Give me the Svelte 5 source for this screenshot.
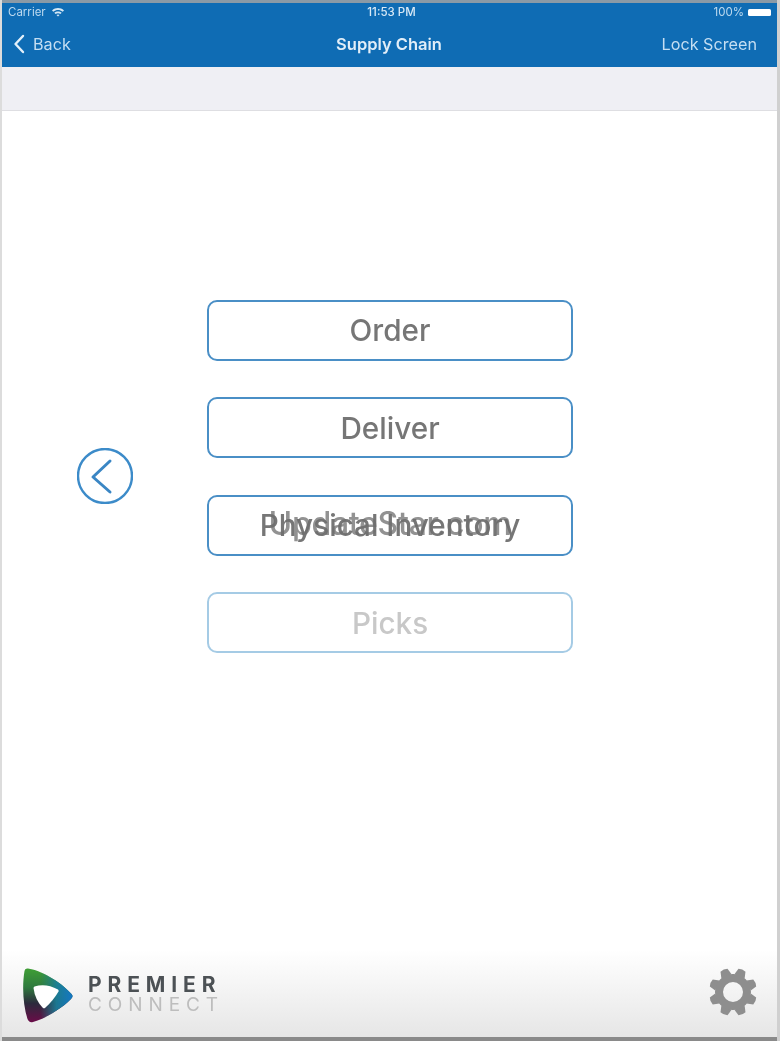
<script>
  const items = [
    { label: 'Order' },
    { label: 'Deliver' },
    { label: 'Physical Inventory', mark: 'UpdateStar.com' },
    { label: 'Picks', faded: true }
  ];
  const teeth = [22.5, 67.5, 112.5, 157.5, 202.5, 247.5, 292.5, 337.5];
</script>

<div class="frame">
  <div class="screen">
    <header class="nav">
      <div class="status">
        <div class="status-left">
          <span>Carrier</span>
          <svg class="wifi" viewBox="0 0 14 10" width="14" height="10" aria-hidden="true">
            <path d="M1 3.4C4.6 0.2 9.4 0.2 13 3.4L11.7 4.8C8.8 2.3 5.2 2.3 2.3 4.8Z" />
            <path d="M3.3 5.8C5.4 4 8.6 4 10.7 5.8L9.4 7.1C8 6 6 6 4.6 7.1Z" />
            <path d="M5.5 8L7 9.6 8.5 8C7.6 7.3 6.4 7.3 5.5 8Z" />
          </svg>
        </div>
        <span class="time">11:53 PM</span>
        <div class="status-right">
          <span>100%</span>
          <span class="battery"></span>
        </div>
      </div>
      <div class="bar">
        <div class="back">
          <svg viewBox="0 0 12 20" width="12" height="20" aria-hidden="true">
            <path d="M10 2L2.5 10L10 18" />
          </svg>
          <span>Back</span>
        </div>
        <h1>Supply Chain</h1>
        <span class="lock">Lock Screen</span>
      </div>
    </header>

    <div class="toolbar"></div>

    <main class="content">
      <button class="round" aria-label="Previous">
        <svg viewBox="0 0 56 56" width="56" height="56" aria-hidden="true">
          <circle cx="28" cy="28" r="27" />
          <path d="M33 13L16 29L33 44" />
        </svg>
      </button>
      <div class="menu">
        {#each items as item}
          <button class="item" class:faded={item.faded}>
            {item.label}
            {#if item.mark}<span class="mark">{item.mark}</span>{/if}
          </button>
        {/each}
      </div>
    </main>

    <footer class="foot">
      <div class="brand">
        <svg viewBox="0 0 54 56" width="54" height="56" aria-hidden="true">
          <defs>
            <linearGradient id="lg1" x1="0.3" y1="0" x2="0.3" y2="1">
              <stop offset="0" stop-color="#3f9f35" />
              <stop offset="0.35" stop-color="#2f7a3e" />
              <stop offset="0.65" stop-color="#2c2a3c" />
              <stop offset="1" stop-color="#6a0c48" />
            </linearGradient>
            <linearGradient id="lg2" x1="0.35" y1="0.5" x2="1" y2="0.5">
              <stop offset="0" stop-color="#1f7f8a" stop-opacity="0" />
              <stop offset="0.5" stop-color="#1a7f9a" stop-opacity="0.9" />
              <stop offset="1" stop-color="#1477c4" />
            </linearGradient>
          </defs>
          <path fill="url(#lg1)" d="M7 1.500C19 3 39 14 50 26.500C52 28.500 52 30 50 32C41 41 26 51 12 55C9 55.700 7.500 54.500 6.500 52C2 38 1 19 3.500 4C4 2 5 1.300 7 1.500Z" />
          <path fill="url(#lg2)" d="M7 1.500C19 3 39 14 50 26.500C52 28.500 52 30 50 32C41 41 26 51 12 55C9 55.700 7.500 54.500 6.500 52C2 38 1 19 3.500 4C4 2 5 1.300 7 1.500Z" />
          <path fill="#fff" d="M13.500 19.500Q25 16 37 22.500Q38 23.500 37.500 24.500Q32 34 24 41Q23 41.500 22 41Q14 33 12.500 21Q12.500 20 13.500 19.500Z" />
        </svg>
        <div class="words">
          <span class="premier">PREMIER</span>
          <span class="connect">CONNECT</span>
        </div>
      </div>
      <svg class="gear" viewBox="-25 -25 50 50" width="50" height="50" aria-hidden="true">
        {#each teeth as a}
          <path d="M-5.500 -17L-3.800 -23.500Q0 -25 3.800 -23.500L5.500 -17Z" transform="rotate({a})" />
        {/each}
        <circle r="14" class="ring" />
      </svg>
    </footer>
  </div>
</div>

<style>
  :global(body) {
    margin: 0;
    background: #fff;
  }
  .frame {
    width: 780px;
    height: 1041px;
    box-sizing: border-box;
    padding: 3px 0 4px 0;
    border-left: 2px solid #dcdcdc;
    border-right: 3px solid #d0d0d0;
    background: linear-gradient(#8b9aa6 0 3px, #fff 3px 1037px, #8a8a8a 1037px);
    font-family: Inter, "Liberation Sans", sans-serif;
    overflow: hidden;
  }
  .screen {
    height: 100%;
    display: flex;
    flex-direction: column;
    background: #fff;
    filter: blur(0.5px);
  }
  .nav {
    height: 64px;
    flex: none;
    background: #0f6cb4;
    color: #cfe4f4;
    display: flex;
    flex-direction: column;
    box-sizing: border-box;
  }
  .status {
    height: 18px;
    padding: 0 6px 0 6px;
    display: grid;
    grid-template-columns: 1fr auto 1fr;
    align-items: center;
    font-size: 11.500px;
    color: #bcd9ef;
  }
  .status-left {
    display: flex;
    align-items: center;
    gap: 5px;
  }
  .wifi path {
    fill: #d6e8f5;
  }
  .time {
    color: #d8e9f6;
    font-weight: 500;
    margin-left: 4px;
  }
  .status-right {
    justify-self: end;
    display: flex;
    align-items: center;
    gap: 4px;
  }
  .battery {
    width: 23px;
    height: 7px;
    border-radius: 1.500px;
    background: #fff;
  }
  .bar {
    flex: 1;
    display: grid;
    grid-template-columns: 1fr auto 1fr;
    align-items: center;
    padding: 0 20px 1px 11px;
    font-size: 16.200px;
    color: #c5def2;
  }
  .back {
    display: flex;
    align-items: center;
    gap: 8px;
  }
  .back svg path {
    fill: none;
    stroke: #e3f0fa;
    stroke-width: 2.400;
    stroke-linecap: round;
    stroke-linejoin: round;
  }
  h1 {
    margin: 0 0 0 8px;
    font-size: 16.500px;
    font-weight: 600;
    color: #e2eef8;
  }
  .lock {
    justify-self: end;
  }
  .toolbar {
    height: 43px;
    flex: none;
    background: #efeff4;
    border-bottom: 1px solid #dedee2;
  }
  .content {
    flex: 1;
    display: flex;
    align-items: center;
    padding: 0 0 110px 75px;
    min-height: 0;
  }
  .round {
    all: unset;
    display: block;
    width: 56px;
    height: 56px;
    margin-right: 74px;
    flex: none;
  }
  .round svg {
    display: block;
  }
  .round circle,
  .round path {
    fill: none;
    stroke: #3c8bc9;
    stroke-width: 2.400;
  }
  .round path {
    stroke: #3a86c4;
    stroke-width: 3;
    stroke-linecap: round;
    stroke-linejoin: round;
  }
  .menu {
    width: 366px;
    display: flex;
    flex-direction: column;
    gap: 36.500px;
    margin-top: 2px;
  }
  .item {
    all: unset;
    position: relative;
    box-sizing: border-box;
    height: 61px;
    display: flex;
    align-items: center;
    justify-content: center;
    border: 2.500px solid #4a8fc6;
    border-radius: 10px;
    color: #767676;
    font-size: 29.700px;
    font-weight: 500;
  }
  .item.faded {
    border-color: #a5cbe5;
    color: #c8c8c8;
  }
  .mark {
    position: absolute;
    left: 0;
    right: 0;
    top: 7px;
    text-align: center;
    color: #6e6e6e;
    opacity: 0.75;
    font-size: 32px;
    font-weight: 500;
    letter-spacing: -0.300px;
  }
  .foot {
    height: 87px;
    flex: none;
    background: linear-gradient(#ffffff, #e6e6e6);
    display: flex;
    align-items: center;
    justify-content: space-between;
    padding: 0 19px 0 19px;
  }
  .brand {
    display: flex;
    align-items: center;
    gap: 13px;
    margin-top: 3px;
  }
  .words {
    display: flex;
    flex-direction: column;
    line-height: 20px;
  }
  .premier {
    font-size: 21px;
    font-weight: 700;
    letter-spacing: 5.900px;
    color: #4c5155;
    white-space: nowrap;
  }
  .connect {
    font-size: 19px;
    font-weight: 400;
    letter-spacing: 5.900px;
    color: #bdbdbd;
    white-space: nowrap;
  }
  .gear {
    display: block;
    margin-bottom: 3px;
  }
  .gear path {
    fill: #8e8e8e;
  }
  .gear .ring {
    fill: none;
    stroke: #8e8e8e;
    stroke-width: 8;
  }
</style>
